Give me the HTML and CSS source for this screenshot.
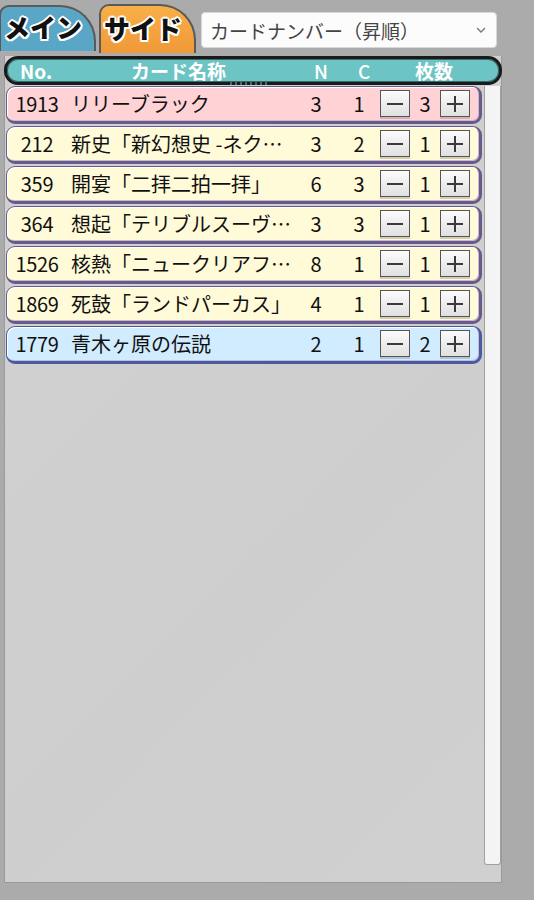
FILE: index.html
```html
<!DOCTYPE html>
<html lang="ja">
<head>
<meta charset="utf-8">
<link rel="stylesheet" href="styles.css">
</head>
<body>
<div class="top">
  <div class="tab tab-main"><span class="tab-label">メイン</span></div>
  <div class="tab tab-side"><span class="tab-label">サイド</span></div>
  <div class="select"><span>カードナンバー（昇順）</span>
    <svg class="chev" width="12" height="8" viewBox="0 0 12 8"><path d="M2 2 L6 6 L10 2" fill="none" stroke="#777" stroke-width="1.3"/></svg>
  </div>
</div>
<div class="panel">
  <div class="head">
    <span class="h-no">No.</span>
    <span class="h-name">カード名称</span>
    <span class="h-n">N</span>
    <span class="h-c">C</span>
    <span class="h-cnt">枚数</span>
    <span class="notch"></span>
  </div>
  <div class="body">
    <div class="list">
      <div class="row pink"><span class="no">1913</span><span class="name">リリーブラック</span><span class="n">3</span><span class="c">1</span><span class="btn minus" aria-label="−"></span><span class="cnt">3</span><span class="btn plus" aria-label="+"></span></div>
      <div class="row yellow"><span class="no">212</span><span class="name">新史「新幻想史 -ネク…</span><span class="n">3</span><span class="c">2</span><span class="btn minus" aria-label="−"></span><span class="cnt">1</span><span class="btn plus" aria-label="+"></span></div>
      <div class="row yellow"><span class="no">359</span><span class="name">開宴「二拝二拍一拝」</span><span class="n">6</span><span class="c">3</span><span class="btn minus" aria-label="−"></span><span class="cnt">1</span><span class="btn plus" aria-label="+"></span></div>
      <div class="row yellow"><span class="no">364</span><span class="name">想起「テリブルスーヴ…</span><span class="n">3</span><span class="c">3</span><span class="btn minus" aria-label="−"></span><span class="cnt">1</span><span class="btn plus" aria-label="+"></span></div>
      <div class="row yellow"><span class="no">1526</span><span class="name">核熱「ニュークリアフ…</span><span class="n">8</span><span class="c">1</span><span class="btn minus" aria-label="−"></span><span class="cnt">1</span><span class="btn plus" aria-label="+"></span></div>
      <div class="row yellow"><span class="no">1869</span><span class="name">死鼓「ランドパーカス」</span><span class="n">4</span><span class="c">1</span><span class="btn minus" aria-label="−"></span><span class="cnt">1</span><span class="btn plus" aria-label="+"></span></div>
      <div class="row blue"><span class="no">1779</span><span class="name">青木ヶ原の伝説</span><span class="n">2</span><span class="c">1</span><span class="btn minus" aria-label="−"></span><span class="cnt">2</span><span class="btn plus" aria-label="+"></span></div>
    </div>
    <div class="scroll"></div>
  </div>
</div>
</body>
</html>
```
FILE: styles.css
```css
html, body {
  margin: 0;
  padding: 0;
}
body {
  width: 534px;
  height: 900px;
  background: #ababab;
  font-family: "Noto Sans CJK JP", "Noto Sans", sans-serif;
  color: #111;
  overflow: hidden;
}
.top {
  height: 56px;
  display: flex;
  align-items: flex-end;
  position: relative;
}
.tab {
  box-sizing: border-box;
  border: 2px solid #5a5a5a;
  border-bottom: none;
  border-radius: 10px 36px 0 0;
  display: flex;
  align-items: center;
  padding-left: 3px;
  padding-bottom: 4px;
}
.tab-main {
  width: 97px;
  height: 46px;
  margin-bottom: 5px;
  background: #5aa6c6;
  margin-left: -1px;
}
.tab-side {
  width: 97px;
  height: 49px;
  margin-left: 3px;
  margin-bottom: 3px;
  background: linear-gradient(#f8b048, #f09838);
}
.tab-label {
  font-size: 26px;
  font-weight: 900;
  color: #111;
  line-height: 1;
  text-shadow: 2px 0 0 #fff, -2px 0 0 #fff, 0 2px 0 #fff, 0 -2px 0 #fff, 1.5px 1.5px 0 #fff, -1.5px -1.5px 0 #fff, 1.5px -1.5px 0 #fff, -1.5px 1.5px 0 #fff;
}
.select {
  position: absolute;
  left: 201px;
  top: 12px;
  width: 296px;
  height: 36px;
  box-sizing: border-box;
  background: #fcfcfc;
  border: 1px solid #d8d8d8;
  border-radius: 4px;
  display: flex;
  align-items: center;
  justify-content: space-between;
  padding: 0 9px 0 8px;
  font-size: 19px;
  color: #444;
}
.panel {
  margin-left: 4px;
  width: 498px;
  height: 827px;
  background: linear-gradient(135deg, #d1d1d1 0%, #cecece 60%, #d0d0d0 100%);
  box-sizing: border-box;
  border-left: 1px solid #9a9a9a;
  border-bottom: 1px solid #9a9a9a;
  border-right: 1px solid #9a9a9a;
  display: flex;
  flex-direction: column;
}
.head {
  position: relative;
  height: 29px;
  box-sizing: border-box;
  margin-left: -1px;
  margin-right: -1px;
  background: #6cc4c4;
  border: 3px solid #1a1a1a;
  border-radius: 14px;
  box-shadow: inset 0 0 0 1px #3a6a6a;
  color: #fff;
  font-size: 19px;
  font-weight: bold;
}
.head span { line-height: 1; position: absolute; top: 2px; }
.h-no { left: 13px; }
.h-name { left: 124px; }
.h-n { left: 307px; font-weight: 500; }
.h-c { left: 351px; font-weight: 500; }
.h-cnt { left: 408px; }
.notch {
  left: 220px;
  top: auto !important;
  bottom: -3px;
  width: 42px;
  height: 3px;
  background: repeating-linear-gradient(90deg, #1a1a1a 0 3px, #4a6a6a 3px 5px);
}
.body {
  display: flex;
  padding-top: 1px;
  flex: 1;
}
.list {
  width: 476px;
  padding-left: 1px;
  display: flex;
  flex-direction: column;
  gap: 2px;
}
.row {
  height: 38px;
  box-sizing: border-box;
  border: 1px solid #6a5a88;
  border-right-width: 3px;
  border-bottom-width: 3px;
  border-radius: 9px;
  box-shadow: inset 1px 1px 0 #fff, inset -1px -1px 0 #c8b8d8;
  display: flex;
  align-items: center;
  font-size: 20px;
  padding-bottom: 1px;
}
.pink { background: #ffd2d6; }
.yellow { background: #fffad8; }
.blue { background: #d2ecff; border-color: #4a5aa0; }
.no { width: 58px; text-align: center; padding-left: 1px; letter-spacing: -0.3px; }
.name { width: 238px; padding-left: 5px; white-space: nowrap; overflow: hidden; }
.n { width: 14px; text-align: center; }
.c { width: 14px; text-align: center; margin-left: 29px; }
.cnt { width: 30px; text-align: center; }
.btn {
  position: relative;
  margin-left: 14px;
  width: 30px;
  height: 27px;
  box-sizing: border-box;
  border: 1px solid #555;
  background: linear-gradient(#fbfbfb, #e0e0e0);
  box-shadow: 0 2px 0 rgba(80,80,80,0.25);
}
.btn + .cnt + .btn { margin-left: 0; }
.btn::before, .plus::after {
  content: "";
  position: absolute;
  left: 6px;
  top: 12px;
  width: 16px;
  height: 2px;
  background: #3a3a3a;
}
.plus::after {
  left: 13px;
  top: 5px;
  width: 2px;
  height: 16px;
}
.scroll {
  margin-left: 2px;
  width: 17px;
  height: 779px;
  box-sizing: border-box;
  background: #f4f4f4;
  border: 1px solid #a0a0a0;
  border-top: none;
  border-radius: 0 0 3px 3px;
}
```
